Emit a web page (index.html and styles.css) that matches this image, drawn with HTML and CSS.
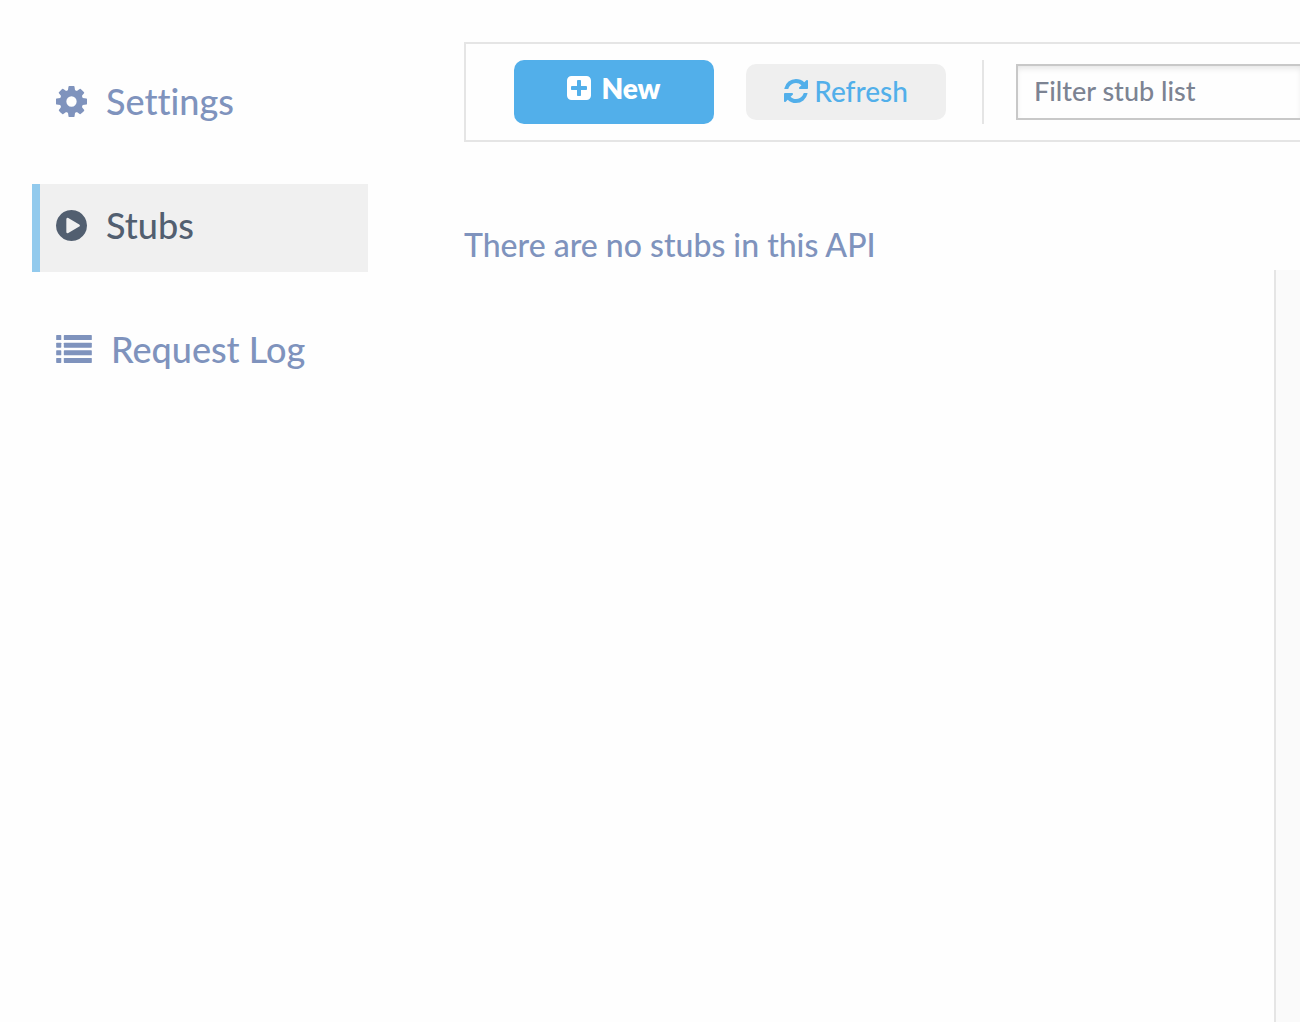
FILE: index.html
```html
<!DOCTYPE html>
<html lang="en">
<head>
<meta charset="utf-8">
<meta name="viewport" content="width=device-width, initial-scale=1">
<title>Stubs</title>
<link rel="stylesheet" href="styles.css">
</head>
<body>
<div class="app">
  <nav class="sidebar">
    <a class="nav-item" href="#settings">
      <svg class="nav-icon" viewBox="128 128 1536 1536" aria-hidden="true"><path d="M1152 896q0-106-75-181t-181-75-181 75-75 181 75 181 181 75 181-75 75-181zm512-109v222q0 12-8 23t-20 13l-185 28q-19 54-39 91 35 50 107 138 10 12 10 25t-9 23q-27 37-99 108t-94 71q-12 0-26-9l-138-108q-44 23-91 38-16 136-29 186-7 28-36 28h-222q-14 0-24.500-8.500t-11.500-21.500l-28-184q-49-16-90-37l-141 107q-10 9-25 9-14 0-25-11-126-114-165-168-7-10-7-23 0-12 8-23 15-21 51-66.500t54-70.500q-27-50-41-99l-183-27q-13-2-21-12.500t-8-23.500v-222q0-12 8-23t19-13l186-28q14-46 39-92-40-57-107-138-10-12-10-24 0-10 9-23 26-36 98.500-107.500t94.500-71.500q13 0 26 10l138 107q44-23 91-38 16-136 29-186 7-28 36-28h222q14 0 24.500 8.500t11.500 21.500l28 184q49 16 90 37l142-107q9-9 24-9 13 0 25 10 129 119 165 170 7 8 7 22 0 12-8 23-15 21-51 66.500t-54 70.500q26 50 41 98l183 28q13 2 21 12.500t8 23.500z"/></svg>
      <span>Settings</span>
    </a>
    <a class="nav-item active" href="#stubs" aria-current="page">
      <svg class="nav-icon" viewBox="128 128 1536 1536" aria-hidden="true"><path d="M896 128q209 0 385.500 103t279.500 279.500 103 385.500-103 385.500-279.500 279.500-385.500 103-385.500-103-279.500-279.500-103-385.500 103-385.500 279.500-279.500 385.500-103zm384 823q32-18 32-55t-32-55l-544-320q-31-19-64-1-32 19-32 56v640q0 37 32 56 16 8 32 8 17 0 32-9z"/></svg>
      <span>Stubs</span>
    </a>
    <a class="nav-item" href="#log">
      <svg class="nav-icon wide" viewBox="0 0 1792 1408" aria-hidden="true"><rect width="256" height="256" rx="32"/><rect x="384" width="1408" height="256" rx="32"/><rect y="384" width="256" height="256" rx="32"/><rect x="384" y="384" width="1408" height="256" rx="32"/><rect y="768" width="256" height="256" rx="32"/><rect x="384" y="768" width="1408" height="256" rx="32"/><rect y="1152" width="256" height="256" rx="32"/><rect x="384" y="1152" width="1408" height="256" rx="32"/></svg>
      <span>Request Log</span>
    </a>
  </nav>
  <main class="content">
    <div class="toolbar">
      <button class="btn btn-primary" type="button">
        <svg class="btn-icon" viewBox="128 128 1536 1536" aria-hidden="true"><path d="M1408 960v-128q0-26-19-45t-45-19h-320v-320q0-26-19-45t-45-19h-128q-26 0-45 19t-19 45v320h-320q-26 0-45 19t-19 45v128q0 26 19 45t45 19h320v320q0 26 19 45t45 19h128q26 0 45-19t19-45v-320h320q26 0 45-19t19-45zm256-544v960q0 119-84.500 203.500t-203.500 84.500h-960q-119 0-203.500-84.500t-84.500-203.500v-960q0-119 84.500-203.500t203.500-84.500h960q119 0 203.500 84.500t84.500 203.500z"/></svg>
        <span>New</span>
      </button>
      <button class="btn btn-secondary" type="button">
        <svg class="btn-icon" viewBox="128 128 1536 1536" aria-hidden="true"><path d="M1639 1056q0 5-1 7-64 268-268 434.500t-478 166.500q-146 0-282.500-55t-243.500-157l-129 129q-19 19-45 19t-45-19-19-45v-448q0-26 19-45t45-19h448q26 0 45 19t19 45-19 45l-137 137q71 66 161 102t187 36q134 0 250-65t186-179q11-17 53-117 8-23 30-23h192q13 0 22.500 9.500t9.500 22.500zm25-800v448q0 26-19 45t-45 19h-448q-26 0-45-19t-19-45 19-45l138-138q-148-137-349-137-134 0-250 65t-186 179q-11 17-53 117-8 23-30 23h-199q-13 0-22.500-9.500t-9.500-22.500v-7q65-268 270-434.500t480-166.500q146 0 284 55.500t245 156.500l130-129q19-19 45-19t45 19 19 45z"/></svg>
        <span>Refresh</span>
      </button>
      <div class="filter">
        <input class="filter-input" type="text" placeholder="Filter stub list" aria-label="Filter stub list">
      </div>
    </div>
    <p class="empty">There are no stubs in this API</p>
    <div class="workspace">
      <aside class="detail" aria-label="Stub details"></aside>
    </div>
  </main>
</div>
</body>
</html>
```
FILE: styles.css
```css
* {
  box-sizing: border-box;
}

body {
  margin: 0;
  background: #fefefe;
  color: #7f93bd;
  font-family: Lato, "Open Sans", sans-serif;
  font-variant-ligatures: none;
}

svg {
  display: block;
  flex: none;
  fill: currentColor;
}

.app {
  display: flex;
  gap: 96px;
  min-height: 100vh;
  padding-left: 32px;
}

.sidebar {
  display: flex;
  flex: none;
  flex-direction: column;
  gap: 36px;
  width: 336px;
  padding-top: 60px;
}

.nav-item {
  display: flex;
  align-items: center;
  gap: 19px;
  height: 88px;
  padding: 0 16px 6px;
  border-left: 8px solid transparent;
  color: inherit;
  font-size: 36px;
  font-weight: 500;
  line-height: 44px;
  text-decoration: none;
}

.nav-item.active {
  border-color: #92caed;
  background: #f0f0f0;
  color: #525f70;
}

.nav-icon {
  width: 31px;
  height: 31px;
}

.nav-icon.wide {
  width: 36px;
  height: 28px;
}

.content {
  display: flex;
  flex: 1;
  flex-direction: column;
  min-width: 0;
  padding-top: 42px;
}

.toolbar {
  display: flex;
  align-items: center;
  gap: 32px;
  height: 100px;
  padding-left: 48px;
  border: 2px solid #e5e5e5;
  border-right: 0;
}

.btn {
  display: flex;
  flex: none;
  align-items: center;
  justify-content: center;
  width: 200px;
  height: 56px;
  padding: 0 0 2px;
  border: 0;
  border-radius: 10px;
  font-family: inherit;
  font-size: 28px;
  font-weight: 500;
  line-height: 32px;
}

.btn-primary {
  gap: 10px;
  height: 64px;
  padding-bottom: 8px;
  background: #52afea;
  color: #fff;
  font-weight: 800;
}

.btn-secondary {
  gap: 6px;
  background: #efefef;
  color: #52afea;
}

.btn-icon {
  width: 24px;
  height: 24px;
}

.filter {
  display: flex;
  flex: 1;
  align-items: center;
  min-width: 0;
  height: 64px;
  margin-left: 4px;
  padding-left: 32px;
  border-left: 2px solid #e5e5e5;
}

.filter-input {
  flex: 1;
  min-width: 0;
  height: 56px;
  padding: 0 16px 4px;
  border: 2px solid #c8c8c8;
  border-right: 0;
  border-radius: 0;
  background: #fefefe;
  box-shadow: inset 0 4px 6px -2px #e2e2e2;
  color: #7c8392;
  font-family: inherit;
  font-size: 27px;
  font-weight: 500;
}

.filter-input::placeholder {
  color: #7c8392;
  opacity: 1;
}

.empty {
  margin: 79px 0 1px;
  font-size: 32px;
  font-weight: 500;
  line-height: 48px;
}

.workspace {
  display: flex;
  flex: 1;
  justify-content: flex-end;
}

.detail {
  width: 26px;
  border-left: 2px solid #e5e5e5;
  background: #fafafa;
}
```
